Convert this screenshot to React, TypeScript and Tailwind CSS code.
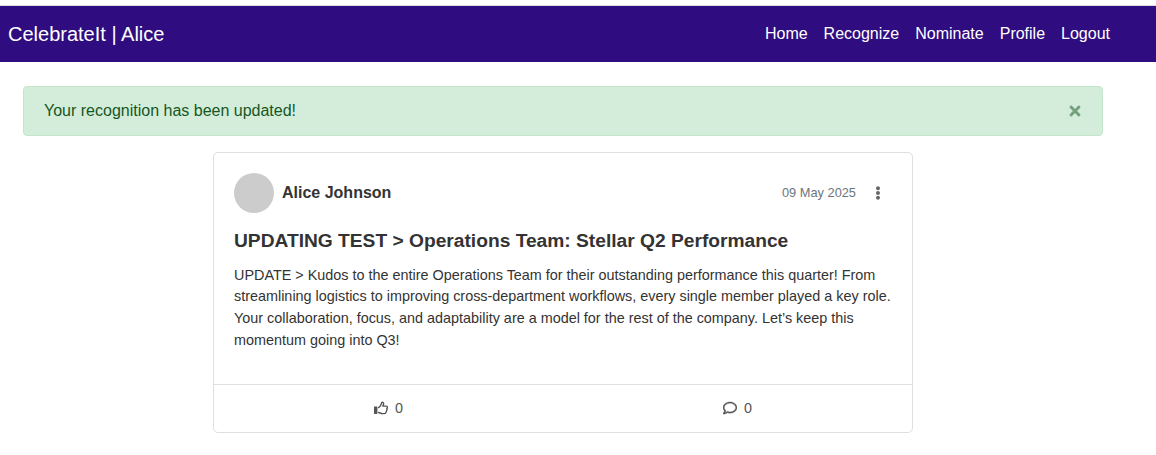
import { FaEllipsisV, FaRegComment, FaTimes } from "react-icons/fa";

const links = ["Home", "Recognize", "Nominate", "Profile", "Logout"];

function ThumbsUp() {
  return (
    <svg viewBox="0 0 14 14" className="-mt-px h-3.5 w-3.5" aria-hidden="true">
      <rect x="0" y="5.6" width="3.4" height="7.4" rx="0.4" fill="currentColor" />
      <path
        d="M4.6 6.6 C6 5.8 7 4.6 7.2 3.2 C7.3 2.1 7.5 1.3 8.3 1.3 C9.3 1.3 9.7 2.2 9.6 3 C9.5 3.9 9.1 4.5 8.8 5.1 H12 C13 5.1 13.5 5.8 13.4 6.5 C13.3 7.1 12.9 7.5 12.8 7.7 C13.2 8.5 12.9 9.3 12.5 9.7 C12.6 10.4 12.3 11 11.9 11.3 C11.9 12.1 11.2 12.6 10.2 12.6 H8.4 C6.8 12.6 5.8 11.6 4.6 11.5"
        fill="none"
        stroke="currentColor"
        strokeWidth="1.4"
        strokeLinejoin="round"
        strokeLinecap="round"
      />
    </svg>
  );
}

export default function App() {
  return (
    <div className="min-h-[455px] bg-white pt-[5px] font-['Liberation_Sans',Arial,sans-serif] text-[#333]">
      <nav className="flex h-[57px] items-center justify-between border-t border-[#dadce0] bg-[#2f0c80] pl-2 pr-[46px] text-white">
        <a className="text-xl leading-[30px]">CelebrateIt | Alice</a>
        <ul className="flex gap-4 text-base">
          {links.map((l) => (
            <li key={l}>{l}</li>
          ))}
        </ul>
      </nav>
      <main className="ml-[23px] mt-6 w-[1080px]">
        <div className="flex h-[50px] items-center justify-between rounded border border-[#c3e6cb] bg-[#d4edda] pl-5 pr-[21px] text-[#155724]">
          <span>Your recognition has been updated!</span>
          <button aria-label="Close" className="-mt-px opacity-50">
            <FaTimes className="h-4 w-3" />
          </button>
        </div>
        <article className="mx-auto mt-4 flex h-[281px] w-[700px] flex-col rounded-[5px] border border-[#dfdfdf]">
          <div className="flex-1 px-5 pt-5">
            <header className="flex h-10 items-center">
              <div className="size-10 rounded-full bg-[#ccc]" />
              <span className="ml-2 text-base font-bold">Alice Johnson</span>
              <time className="ml-auto text-[12.8px] text-[#6c757d]">09 May 2025</time>
              <button aria-label="More" className="ml-[15px] mr-[7px] text-[#666]">
                <FaEllipsisV className="size-3.5" />
              </button>
            </header>
            <h2 className="mt-4 text-[19.2px] font-bold leading-[23px]">
              UPDATING TEST &gt; Operations Team: Stellar Q2 Performance
            </h2>
            <p className="mt-[12.8px] text-[14.4px] leading-[21.6px]">
              UPDATE &gt; Kudos to the entire Operations Team for their outstanding performance this quarter! From
              streamlining logistics to improving cross-department workflows, every single member played a key role.
              Your collaboration, focus, and adaptability are a model for the rest of the company. Let’s keep this
              momentum going into Q3!
            </p>
          </div>
          <footer className="grid h-12 grid-cols-2 border-t border-[#dfdfdf] text-[14.4px] text-[#555]">
            <button className="flex items-center justify-center gap-[7px]">
              <ThumbsUp />
              <span>0</span>
            </button>
            <button className="flex items-center justify-center gap-[7px]">
              <FaRegComment className="-mt-px size-3.5 stroke-current" strokeWidth={12} />
              <span>0</span>
            </button>
          </footer>
        </article>
      </main>
    </div>
  );
}
